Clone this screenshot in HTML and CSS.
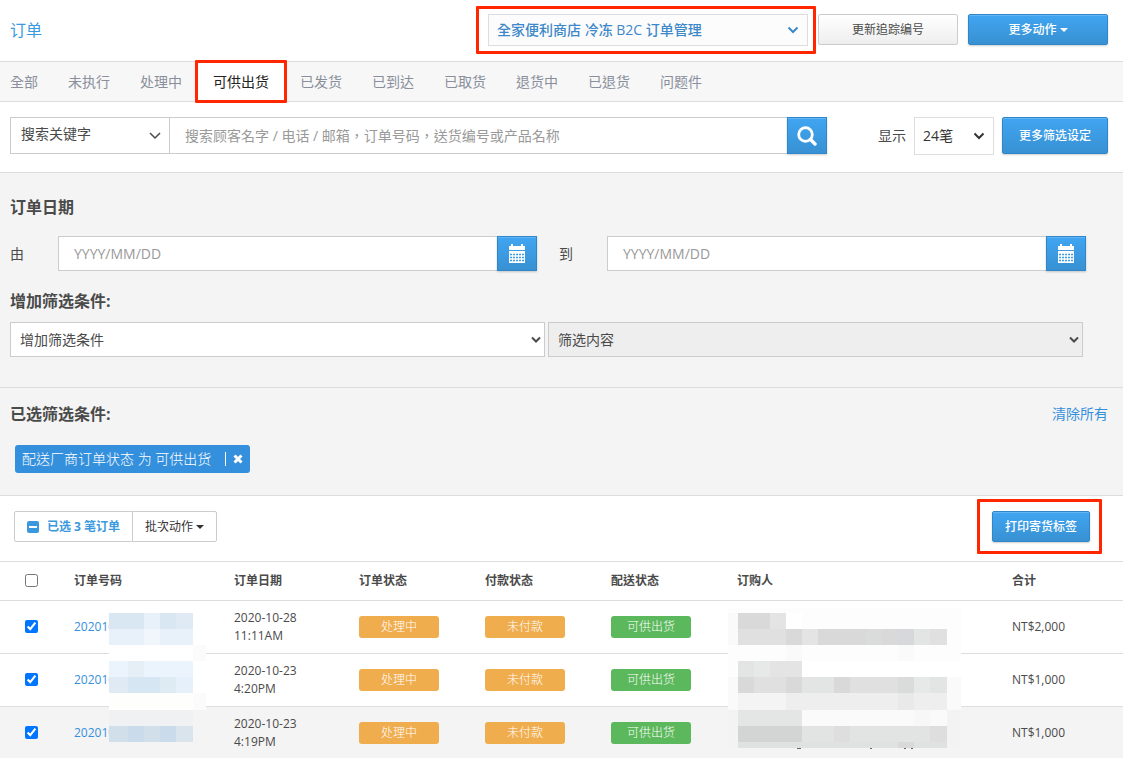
FILE: index.html
```html
<!DOCTYPE html>
<html lang="zh-Hant">
<head>
  <meta charset="UTF-8" />
  <meta name="viewport" content="width=device-width, initial-scale=1.0" />
  <title>订单</title>
  <link rel="stylesheet" href="styles.css">
</head>
<body>
  <header class="page-header">
    <h1>订单</h1>
    <div class="select-box channel callout">
      <select aria-label="订单管理">
        <option>全家便利商店 冷冻 B2C 订单管理</option>
      </select>
      <svg class="chevron" viewBox="0 0 12 8"><path d="M1.5 1.5L6 6L10.5 1.5" /></svg>
    </div>
    <button type="button" class="btn btn-default">更新追踪编号</button>
    <button type="button" class="btn btn-primary">更多动作<span class="caret"></span></button>
  </header>

  <nav class="tabs">
    <a href="#">全部</a>
    <a href="#">未执行</a>
    <a href="#">处理中</a>
    <a href="#" class="active callout">可供出货</a>
    <a href="#">已发货</a>
    <a href="#">已到达</a>
    <a href="#">已取货</a>
    <a href="#">退货中</a>
    <a href="#">已退货</a>
    <a href="#">问题件</a>
  </nav>

  <form class="search-bar">
    <div class="select-box search-type">
      <select aria-label="搜索类型">
        <option>搜索关键字</option>
      </select>
      <svg class="chevron" viewBox="0 0 12 8"><path d="M1 1L6 6L11 1" /></svg>
    </div>
    <input type="text" class="search-input" aria-label="搜索" placeholder="搜索顾客名字 / 电话 / 邮箱，订单号码，送货编号或产品名称">
    <button type="button" class="btn btn-primary btn-icon" aria-label="搜索">
      <svg width="20" height="20" viewBox="0 0 20 20"><circle cx="8.5" cy="8.5" r="6.8" fill="none" stroke="#fff" stroke-width="2.8" /><path d="M13.5 13.5L18 18" stroke="#fff" stroke-width="3.4" stroke-linecap="round" /></svg>
    </button>
    <label for="page-size" class="page-size-label">显示</label>
    <div class="select-box page-size">
      <select id="page-size">
        <option>24笔</option>
      </select>
      <svg class="chevron" viewBox="0 0 12 8"><path d="M1.5 1.5L6 6L10.5 1.5" /></svg>
    </div>
    <button type="button" class="btn btn-primary btn-filter">更多筛选设定</button>
  </form>

  <section class="filters">
    <h2>订单日期</h2>
    <div class="date-row">
      <label for="date-from">由</label>
      <input type="text" id="date-from" placeholder="YYYY/MM/DD">
      <button type="button" class="btn btn-primary btn-icon" aria-label="选择开始日期">
        <svg width="18" height="20" viewBox="0 0 18 20"><path fill="#fff" d="M1 2h2V0h2v2h8V0h2v2h2v4H1zM1 7h16v12H1z" /><path stroke="#3d9ee4" stroke-width="1.5" stroke-dasharray="2 1" d="M2 10.500h14M2 13.500h14M2 16.500h14" /></svg>
      </button>
      <label for="date-to" class="to">到</label>
      <input type="text" id="date-to" placeholder="YYYY/MM/DD">
      <button type="button" class="btn btn-primary btn-icon" aria-label="选择结束日期">
        <svg width="18" height="20" viewBox="0 0 18 20"><path fill="#fff" d="M1 2h2V0h2v2h8V0h2v2h2v4H1zM1 7h16v12H1z" /><path stroke="#3d9ee4" stroke-width="1.5" stroke-dasharray="2 1" d="M2 10.500h14M2 13.500h14M2 16.500h14" /></svg>
      </button>
    </div>
    <h2>增加筛选条件:</h2>
    <div class="condition-row">
      <div class="select-box">
        <select aria-label="增加筛选条件">
          <option>增加筛选条件</option>
        </select>
        <svg class="chevron" viewBox="0 0 12 8"><path d="M2 1.5L6 5.5L10 1.5" /></svg>
      </div>
      <div class="select-box">
        <select aria-label="筛选内容" disabled>
          <option>筛选内容</option>
        </select>
        <svg class="chevron" viewBox="0 0 12 8"><path d="M2 1.5L6 5.5L10 1.5" /></svg>
      </div>
    </div>
  </section>

  <section class="selected-filters">
    <div class="selected-head">
      <h2>已选筛选条件:</h2>
      <a href="#">清除所有</a>
    </div>
    <div class="tag">
      <span>配送厂商订单状态 为 可供出货</span>
      <button type="button" aria-label="移除">
        <svg width="10" height="10" viewBox="0 0 10 10"><path d="M1.5 1.5L8.5 8.5M8.5 1.5L1.5 8.5" stroke="#fff" stroke-width="3" /></svg>
      </button>
    </div>
  </section>

  <div class="toolbar">
    <div class="btn-group">
      <button type="button" class="selected-count">
        <svg width="12" height="12" viewBox="0 0 12 12"><rect width="12" height="12" rx="2" fill="#3a99de" /><path d="M2 6h8" stroke="#fff" stroke-width="2" /></svg>
        已选 3 笔订单
      </button>
      <button type="button">批次动作<span class="caret"></span></button>
    </div>
    <button type="button" class="btn btn-primary btn-print callout">打印寄货标签</button>
  </div>

  <table class="orders">
    <colgroup>
      <col class="col-check">
      <col class="col-number">
      <col class="col-date">
      <col class="col-status">
      <col class="col-status">
      <col class="col-status">
      <col>
      <col class="col-total">
    </colgroup>
    <thead>
      <tr>
        <th><input type="checkbox" aria-label="全选"></th>
        <th>订单号码</th>
        <th>订单日期</th>
        <th>订单状态</th>
        <th>付款状态</th>
        <th>配送状态</th>
        <th>订购人</th>
        <th>合计</th>
      </tr>
    </thead>
    <tbody>
      <tr>
        <td><input type="checkbox" aria-label="选择订单" checked></td>
        <td class="masked">
          <a href="#">202010</a>
          <svg class="mosaic mosaic-number" width="97" height="135" viewBox="0 0 97 135" shape-rendering="crispEdges">
            <rect width="97" height="97" fill="#fff" />
            <rect y="97" width="84" height="38" fill="#f4f4f4" />
            <path fill="#d9e7f3" d="M0 0h35v16H0zM51 0h16v16H51z" />
            <path fill="#e8f0fa" d="M35 0h16v16H35zM0 16h35v16H0zM51 16h33v16H51z" />
            <path fill="#dfeaf5" d="M67 0h17v16H67zM0 64h19v16H0z" />
            <path fill="#f1f5fc" d="M35 16h16v16H35z" />
            <path fill="#fbfbfb" d="M84 32h13v16H84zM84 80h13v17H84z" />
            <path fill="#ebf3fc" d="M0 48h84v16H0z" />
            <path fill="#e7eff6" d="M19 48h16v16H19z" />
            <path fill="#d6e7f3" d="M19 64h32v16H19z" />
            <path fill="#dfebf3" d="M51 64h16v16H51z" />
            <path fill="#e6f0fa" d="M67 64h17v16H67z" />
            <path fill="#fefefc" d="M0 80h84v17H0z" />
            <path fill="#f0f1f2" d="M0 97h84v16H0z" />
            <path fill="#d1dfea" d="M0 113h84v16H0z" />
            <path fill="#cadbec" d="M19 113h16v16H19zM51 113h16v16H51z" />
            <path fill="#d9e4ed" d="M67 113h17v16H67z" />
          </svg>
        </td>
        <td>2020-10-28<br>11:11AM</td>
        <td><span class="label label-warning">处理中</span></td>
        <td><span class="label label-warning">未付款</span></td>
        <td><span class="label label-success">可供出货</span></td>
        <td class="masked">
          <svg class="mosaic mosaic-buyer" width="233" height="141" viewBox="0 0 233 141" shape-rendering="crispEdges">
            <rect width="233" height="102" fill="#fdfdfd" />
            <rect y="102" width="233" height="38" fill="#f3f3f3" />
            <path fill="#fff" d="M58 5h16v16H58zM74 53h159v16H74z" />
            <path fill="#d9d9d9" d="M10 5h32v16H10zM58 21h16v16H58zM90 21h48v16H90zM154 21h16v16H154zM10 69h16v16H10zM58 69h16v16H58zM106 69h16v16H106z" />
            <path fill="#e4e4e4" d="M42 5h16v16H42zM74 21h16v16H74zM42 53h32v16H42z" />
            <path fill="#dfe0df" d="M10 21h48v16H10zM122 69h64v16H122zM26 69h32v16H26zM202 21h17v16H202z" />
            <path fill="#dadcdb" d="M138 21h16v16H138zM170 69h16v16H170z" />
            <path fill="#e2e5e4" d="M186 21h16v16H186zM10 53h16v16H10zM74 69h32v16H74zM202 69h17v16H202z" />
            <path fill="#e7e9e8" d="M26 53h16v16H26zM186 69h16v16H186z" />
            <path fill="#d7d8dc" d="M170 21h16v16H170z" />
            <path fill="#fafafa" d="M0 5h10v32H0zM58 37h16v16H58zM170 37h16v16H170zM219 69h14v33H219zM0 69h10v33H0z" />
            <path fill="#f4f4f4" d="M10 85h48v17H10z" />
            <path fill="#eee" d="M58 85h161v17H58z" />
            <path fill="#e9e9e9" d="M170 85h16v17H170z" />
            <path fill="#e4e5e5" d="M10 102h64v16H10z" />
            <path fill="#fafafa" d="M74 102h145v16H74z" />
            <path fill="#f7f7f7" d="M186 102h16v16H186z" />
            <path fill="#d3d4d4" d="M10 118h64v16H10z" />
            <path fill="#e2e3e3" d="M74 118h145v16H74z" />
            <path fill="#dedede" d="M106 118h16v16H106zM202 118h17v16H202z" />
            <path fill="#e0e2e1" d="M10 134h209v6H10z" />
            <path fill="#d9d9d9" d="M170 134h16v6H170z" />
            <path fill="#666" d="M69 140h4v1H69zM142 140h2v1H142zM176 140h2v1H176zM183 140h2v1H183z" />
          </svg>
        </td>
        <td>NT$2,000</td>
      </tr>
      <tr>
        <td><input type="checkbox" aria-label="选择订单" checked></td>
        <td><a href="#">202010</a></td>
        <td>2020-10-23<br>4:20PM</td>
        <td><span class="label label-warning">处理中</span></td>
        <td><span class="label label-warning">未付款</span></td>
        <td><span class="label label-success">可供出货</span></td>
        <td></td>
        <td>NT$1,000</td>
      </tr>
      <tr class="highlight">
        <td><input type="checkbox" aria-label="选择订单" checked></td>
        <td><a href="#">202010</a></td>
        <td>2020-10-23<br>4:19PM</td>
        <td><span class="label label-warning">处理中</span></td>
        <td><span class="label label-warning">未付款</span></td>
        <td><span class="label label-success">可供出货</span></td>
        <td></td>
        <td>NT$1,000</td>
      </tr>
    </tbody>
  </table>
</body>
</html>
```
FILE: styles.css
```css
:root {
  --blue: #3a99de;
  --text: #4a4a4a;
  --panel: #f4f4f4;
  --line: #ddd;
  --field-line: #ccc;
  --mark: #ff2600;
}
* {
  box-sizing: border-box;
}
body {
  margin: 0;
  height: 100vh;
  overflow: hidden;
  font-family: 'Open Sans', 'Noto Sans CJK TC', sans-serif;
  font-size: 14px;
  line-height: 20px;
  color: var(--text);
  background: #fff;
}
h1, h2 {
  margin: 0;
  font-size: 16px;
  line-height: 24px;
}
a {
  color: #3490dc;
  text-decoration: none;
}
button, input, select {
  font: inherit;
  color: inherit;
  margin: 0;
}
input::placeholder {
  color: #999;
  opacity: 1;
}

/* Buttons */
.btn {
  height: 31px;
  padding: 0;
  border: 1px solid #ccc;
  border-radius: 2px;
  font-size: 12px;
  font-weight: 500;
}
.btn-default {
  width: 140px;
  font-weight: 400;
  background: linear-gradient(#fff, #eee);
}
.btn-primary {
  width: 140px;
  color: #fff;
  border-color: #2f86c8;
  background: linear-gradient(#40a5f2, #3891d2);
  box-shadow: inset 0 1px 0 #62b5f4, 0 1px 2px rgba(0, 0, 0, 0.2);
}
.btn-icon {
  display: flex;
  flex: none;
  align-items: center;
  justify-content: center;
  width: 40px;
  border-radius: 0;
}
.caret {
  display: inline-block;
  margin-left: 3px;
  border: 4px solid transparent;
  border-top-color: currentColor;
  border-bottom: 0;
  vertical-align: middle;
}

/* Drop-downs */
.select-box {
  position: relative;
}
.select-box select {
  display: block;
  width: 100%;
  height: 100%;
  padding: 0 24px 0 9px;
  border: 1px solid var(--field-line);
  border-radius: 0;
  background: #fff;
  appearance: none;
}
.chevron {
  position: absolute;
  top: 50%;
  right: 9px;
  width: 12px;
  height: 8px;
  margin-top: -4px;
  fill: none;
  stroke: currentColor;
  stroke-width: 2;
  pointer-events: none;
}

/* Red marker frame */
.callout {
  position: relative;
}
.callout::after {
  content: '';
  position: absolute;
  inset: -8px -8px -8px -12px;
  border: 3px solid var(--mark);
  border-radius: 1px;
  pointer-events: none;
}

/* Header */
.page-header {
  display: flex;
  align-items: flex-start;
  padding: 14px 15px 15px 10px;
  border-bottom: 1px solid var(--line);
}
.page-header h1 {
  flex: 1;
  padding-top: 4px;
  font-weight: 400;
  color: var(--blue);
}
.channel {
  width: 320px;
  height: 32px;
  margin-right: 10px;
  color: #3d88c9;
}
.channel select {
  padding-left: 8px;
  font-weight: 500;
  border-color: var(--line);
  background: #fcfcfc;
}
.page-header .btn-default {
  margin-right: 10px;
}

/* Tabs */
.tabs {
  display: flex;
  height: 40px;
  padding-right: 10px;
  background: #f7f7f7;
  border-bottom: 1px solid var(--line);
}
.tabs a {
  padding: 0 15px;
  line-height: 40px;
  color: #8a8f9c;
}
.tabs a:first-child {
  padding-left: 10px;
}
.tabs .active {
  padding: 0 16px;
  color: #222;
  background: #fff;
}
.tabs .active::after {
  inset: -2px;
}

/* Search */
.search-bar {
  display: flex;
  padding: 15px 15px 18px 10px;
  border-bottom: 1px solid var(--line);
}
.search-type {
  width: 160px;
  height: 37px;
}
.search-type select {
  padding-left: 10px;
  padding-bottom: 3px;
}
.search-type .chevron {
  stroke-width: 1.5;
}
.search-input {
  flex: 1;
  min-width: 0;
  height: 37px;
  margin-left: -1px;
  padding: 0 15px;
  border: 1px solid var(--field-line);
  border-right: 0;
  border-radius: 0;
}
.search-bar .btn {
  height: 37px;
}
.page-size-label {
  margin: 9px 8px 0 51px;
}
.page-size {
  width: 80px;
  height: 38px;
  margin-bottom: -1px;
  color: #333;
}
.page-size select {
  padding-left: 8px;
  border-color: var(--line);
}
.search-bar .btn-filter {
  width: 106px;
  margin-left: 8px;
}

/* Filters */
.filters {
  padding: 22px 37px 30px 10px;
  background: var(--panel);
  border-bottom: 1px solid var(--line);
}
.date-row {
  display: flex;
  align-items: center;
  margin: 17px 0 18px;
}
.date-row label {
  width: 48px;
}
.date-row .to {
  margin-left: 22px;
}
.date-row input {
  flex: 1;
  min-width: 0;
  height: 35px;
  padding: 0 15px;
  border: 1px solid var(--field-line);
  border-right: 0;
  border-radius: 0;
  background: #fff;
}
.date-row .btn {
  height: 35px;
}
.condition-row {
  display: flex;
  gap: 3px;
  margin: 9px 3px 0 0;
}
.condition-row .select-box {
  flex: 1;
  height: 35px;
}
.condition-row .chevron {
  right: 3px;
}
.condition-row select:disabled {
  color: inherit;
  background: #eee;
  opacity: 1;
}

/* Selected filters */
.selected-filters {
  padding: 14px 15px 22px 10px;
  background: var(--panel);
  border-bottom: 1px solid var(--line);
}
.selected-head {
  display: flex;
  align-items: center;
  justify-content: space-between;
  margin-bottom: 19px;
}
.tag {
  display: inline-flex;
  align-items: center;
  height: 28px;
  margin-left: 5px;
  padding: 0 7px;
  border-radius: 3px;
  font-weight: 300;
  color: #fff;
  background: #3490dc;
  vertical-align: top;
}
.tag button {
  display: flex;
  align-items: center;
  height: 14px;
  margin-left: 14px;
  padding: 0 0 0 7px;
  border: 0;
  border-left: 1px solid #fff;
  background: none;
}

/* Toolbar */
.toolbar {
  display: flex;
  justify-content: space-between;
  padding: 15px 33px 19px 14px;
  border-bottom: 1px solid var(--line);
}
.btn-group {
  display: flex;
}
.btn-group button {
  display: flex;
  align-items: center;
  height: 31px;
  padding: 0 12px;
  border: 1px solid var(--field-line);
  border-radius: 0 2px 2px 0;
  font-size: 12px;
  color: #333;
  background: #fff;
}
.btn-group .selected-count {
  gap: 8px;
  margin-right: -1px;
  border-radius: 2px 0 0 2px;
  font-weight: 700;
  color: var(--blue);
}
.btn-print {
  width: 98px;
}
.btn-print::after {
  inset: -13px -13px -13px -16px;
}

/* Orders */
.orders {
  width: 100%;
  table-layout: fixed;
  border-collapse: collapse;
  font-size: 12px;
  line-height: 18px;
}
.col-check { width: 64px; }
.col-number { width: 160px; }
.col-date { width: 125px; }
.col-status { width: 126px; }
.col-total { width: 121px; }
.orders th,
.orders td {
  padding: 8px 10px;
  border-bottom: 1px solid var(--line);
  text-align: left;
}
.orders th {
  height: 38px;
}
.orders input {
  display: block;
  width: 13px;
  height: 13px;
  margin-left: 15px;
}
.orders .highlight {
  background: var(--panel);
}
.label {
  display: block;
  width: 80px;
  border-radius: 3px;
  line-height: 22px;
  font-weight: 300;
  text-align: center;
  color: #fff;
}
.label-warning { background: #f0ad4e; }
.label-success { background: #5cb85c; }

/* Pixelated cover over personal data */
.masked {
  position: relative;
}
.mosaic {
  position: absolute;
}
.mosaic-number {
  top: 12px;
  left: 45px;
}
.mosaic-buyer {
  top: 7px;
  left: 1px;
}
```
